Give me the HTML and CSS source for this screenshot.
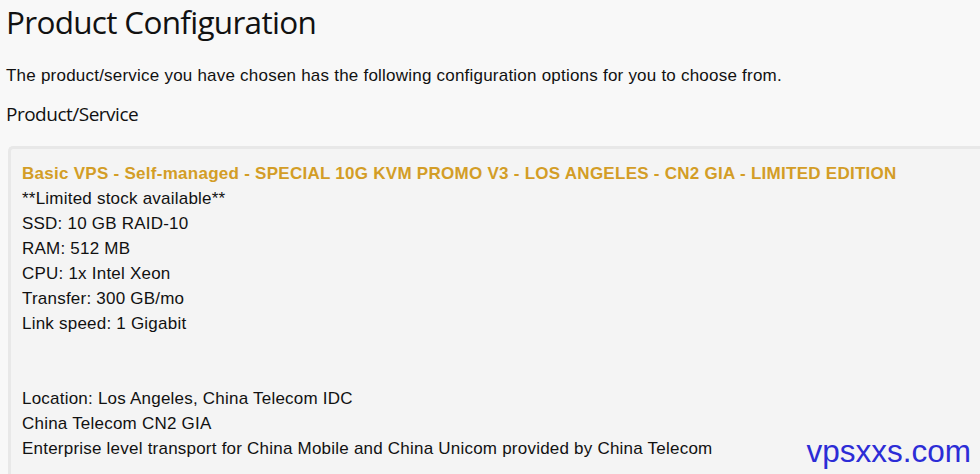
FILE: index.html
```html
<!DOCTYPE html>
<html>
<head>
<meta charset="utf-8">
<link rel="stylesheet" href="styles.css">
</head>
<body>
<div class="page">
  <h1 class="title">Product Configuration</h1>
  <p class="intro">The product/service you have chosen has the following configuration options for you to choose from.</p>
  <h2 class="subtitle">Product/Service</h2>
  <div class="box">
    <div class="name">Basic VPS - Self-managed - SPECIAL 10G KVM PROMO V3 - LOS ANGELES - CN2 GIA - LIMITED EDITION</div>
    <div class="line">**Limited stock available**</div>
    <div class="line">SSD: 10 GB RAID-10</div>
    <div class="line">RAM: 512 MB</div>
    <div class="line">CPU: 1x Intel Xeon</div>
    <div class="line">Transfer: 300 GB/mo</div>
    <div class="line">Link speed: 1 Gigabit</div>
    <div class="line">&nbsp;</div>
    <div class="line">&nbsp;</div>
    <div class="line">Location: Los Angeles, China Telecom IDC</div>
    <div class="line">China Telecom CN2 GIA</div>
    <div class="line">Enterprise level transport for China Mobile and China Unicom provided by China Telecom</div>
  </div>
</div>
<div class="watermark">vpsxxs.com</div>
</body>
</html>
```
FILE: styles.css
```css
html, body {
  margin: 0;
  padding: 0;
  height: 100%;
  overflow: hidden;
}
body {
  background: #f8f8f8;
  font-family: "Liberation Sans", Arial, sans-serif;
  color: #111;
}
.page {
  padding: 0 0 0 6px;
}
.title {
  margin: 0;
  padding-top: 2px;
  font-family: "Open Sans", sans-serif;
  font-weight: 400;
  font-size: 31.5px;
  line-height: 40px;
  color: #111;
  letter-spacing: -0.7px;
}
.intro {
  margin: 23px 0 0 0;
  font-size: 17px;
  letter-spacing: 0.22px;
  line-height: 22px;
}
.subtitle {
  margin: 14px 0 0 0;
  font-family: "Open Sans", sans-serif;
  font-weight: 400;
  font-size: 19px;
  line-height: 26px;
  letter-spacing: -0.5px;
  color: #111;
}
.box {
  margin: 19px 0 0 2px;
  background: #f4f4f4;
  border-top: 3px solid #e8e8e8;
  border-left: 3px solid #e8e8e8;
  border-radius: 5px 0 0 0;
  padding: 12px 0 20px 11px;
  font-size: 17px;
  letter-spacing: 0.22px;
  line-height: 25px;
}
.name {
  color: #d39d26;
  font-weight: 700;
  letter-spacing: 0.27px;
}
.watermark {
  position: absolute;
  right: 9px;
  bottom: 4px;
  font-size: 31.5px;
  color: #2c2cd6;
  font-family: "Liberation Sans", Arial, sans-serif;
}
```
